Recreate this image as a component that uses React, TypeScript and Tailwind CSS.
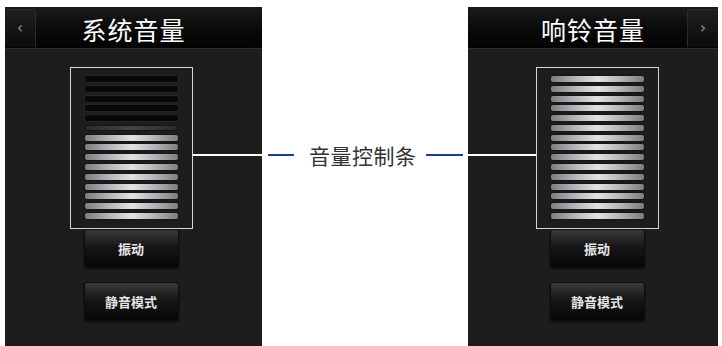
import React from 'react';

const cjk = { fontFamily: '"Noto Sans CJK SC", "Noto Sans", sans-serif' };

interface PanelProps {
  title: string;
  side: 'left' | 'right';
  level: number;
  width: string;
}

function Bar({ state }: { state: 'off' | 'dim' | 'on' }) {
  if (state === 'on') {
    return (
      <div className="h-[6px] rounded-[2px] bg-[linear-gradient(to_right,#7d7d80,#b4b4b8_25%,#e2e2e4_50%,#b4b4b8_75%,#7d7d80)] shadow-[0_0_2px_rgba(0,0,0,0.8)]" />
    );
  }
  if (state === 'dim') {
    return (
      <div className="h-[6px] rounded-[2px] bg-[linear-gradient(to_right,#2c2c2e,#444446_50%,#2c2c2e)] border border-[#151515]" />
    );
  }
  return <div className="h-[6px] rounded-[2px] bg-[#080808] shadow-[0_0_0_1px_#252525]" />;
}

function VolumeButton({ label }: { label: string }) {
  return (
    <div
      className="w-[95px] h-[39px] rounded-[3px] border border-[#0c0c0c] bg-[linear-gradient(to_bottom,#3a3a3a,#161616_45%,#060606)] shadow-[0_1px_2px_rgba(0,0,0,0.7)] flex items-center justify-center text-[13px] font-bold text-[#e6e6e6]"
      style={cjk}
    >
      {label}
    </div>
  );
}

function Panel({ title, side, level, width }: PanelProps) {
  const bars = Array.from({ length: 15 }, (_, i) => {
    const fromBottom = 15 - i;
    if (fromBottom <= level) return 'on' as const;
    if (fromBottom === level + 1) return 'dim' as const;
    return 'off' as const;
  });

  const backBtn = (
    <div
      className={`w-[31px] h-[38px] mt-[2px] bg-[linear-gradient(to_bottom,#1f1f1f,#0c0c0c)] flex items-center justify-center text-[#9a9a9a] text-[15px] ${
        side === 'left' ? 'border-r border-t border-[#2a2a2a] rounded-tr-[3px]' : 'border-l border-t border-[#2a2a2a] rounded-tl-[3px]'
      }`}
      style={{ fontFamily: '"DejaVu Sans", sans-serif' }}
    >
      {side === 'left' ? '‹' : '›'}
    </div>
  );

  return (
    <div className={`${width} h-[339px] bg-[#1d1d1d] flex flex-col`}>
      <div className="h-[42px] flex items-start bg-[linear-gradient(to_bottom,#1b1b1b,#0b0b0b_50%,#030303)] border-b border-[#2e2e2e]">
        {side === 'left' ? backBtn : <div className="w-[31px]" />}
        <div
          className="flex-1 h-full flex items-center justify-center pt-[4px] text-[25px] font-normal text-white tracking-[1px]"
          style={cjk}
        >
          {title}
        </div>
        {side === 'right' ? backBtn : <div className="w-[31px]" />}
      </div>

      <div className={`flex flex-col items-center pt-[18px] ${side === 'left' ? 'pr-[5px]' : 'pl-[8px]'}`}>
        <div className="relative">
          <div className="w-[123px] h-[162px] border-[1.5px] border-[#d4d4d4] pt-[8px] pb-[9px] px-[14px] flex flex-col justify-between">
            {bars.map((s, i) => (
              <Bar key={i} state={s} />
            ))}
          </div>
          {side === 'left' ? (
            <div className="absolute top-[87px] left-[123px] w-[70px] h-[2px] bg-white" />
          ) : (
            <div className="absolute top-[87px] right-[123px] w-[70px] h-[2px] bg-white" />
          )}
        </div>
        <VolumeButton label="振动" />
        <div className="h-[14px]" />
        <VolumeButton label="静音模式" />
      </div>
    </div>
  );
}

export default function App() {
  return (
    <div className="w-[722px] h-[346px] bg-white flex pt-[7px] pl-[5px] overflow-hidden">
      <Panel title="系统音量" side="left" level={9} width="w-[257px]" />

      <div className="w-[206px] h-[339px] flex items-start">
        <div className="mt-[136px] flex items-center w-full pl-[6px]">
          <div className="w-[26px] h-[2px] bg-[#1d3f86]" />
          <div
            className="ml-[15px] text-[21px] leading-[24px] text-[#333] tracking-[0.5px]"
            style={cjk}
          >
            音量控制条
          </div>
          <div className="ml-[9px] w-[37px] h-[2px] bg-[#1d3f86]" />
        </div>
      </div>

      <Panel title="响铃音量" side="right" level={15} width="w-[250px]" />
    </div>
  );
}
